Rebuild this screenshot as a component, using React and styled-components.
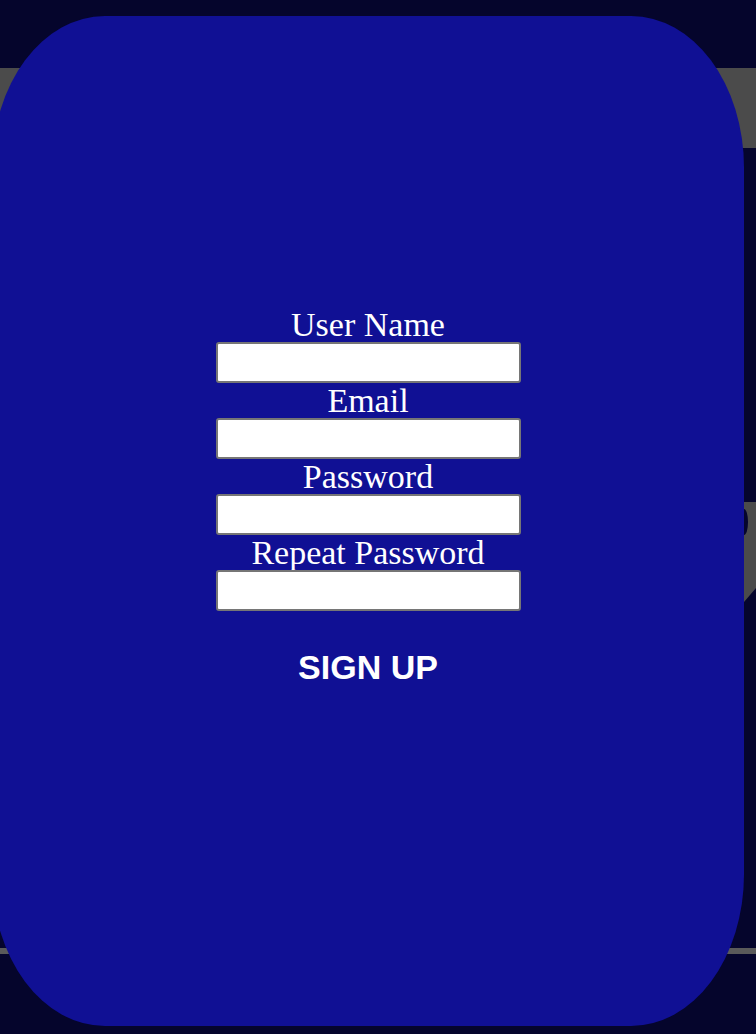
import React from 'react';
import styled, { createGlobalStyle } from 'styled-components';

const GlobalStyle = createGlobalStyle`
  html, body {
    margin: 0;
    padding: 0;
    background: #05052c;
    overflow: hidden;
  }
`;

const App = () => {
  return (
    <>
      <GlobalStyle />
      <Page>
        <Header />
        <Main>
          <SideMark viewBox="0 0 16 100" aria-hidden="true">
            <path d="M0 0 H16 V86 L4 100 H0 Z" fill="#4b4b4b" />
            <ellipse cx="4" cy="20" rx="4" ry="13" fill="#05052c" />
          </SideMark>
        </Main>
        <FooterLine />

        <Modal>
          <Form onSubmit={(e) => e.preventDefault()}>
            <Label htmlFor="username">User Name</Label>
            <Input id="username" type="text" />
            <Label htmlFor="email">Email</Label>
            <Input id="email" type="email" />
            <Label htmlFor="password">Password</Label>
            <Input id="password" type="password" />
            <Label htmlFor="repeat">Repeat Password</Label>
            <Input id="repeat" type="password" />
            <SubmitButton type="submit">SIGN UP</SubmitButton>
          </Form>
        </Modal>
      </Page>
    </>
  );
};

const Page = styled.div`
  position: relative;
  width: 756px;
  height: 1034px;
  padding-top: 68px;
  box-sizing: border-box;
`;

const Header = styled.div`
  height: 80px;
  background: #4b4b4b;
`;

const Main = styled.div`
  height: 800px;
  display: flex;
  justify-content: flex-end;
  align-items: flex-start;
`;

const SideMark = styled.svg`
  width: 16px;
  height: 100px;
  margin-top: 354px;
`;

const FooterLine = styled.div`
  height: 6px;
  background: #5a5a5a;
`;

const Modal = styled.div`
  position: absolute;
  top: 16px;
  left: -8px;
  width: 752px;
  height: 1010px;
  border-radius: 15%;
  background: #101094;
  display: flex;
  justify-content: center;
  padding-top: 291px;
  box-sizing: border-box;
`;

const Form = styled.form`
  width: 305px;
  display: flex;
  flex-direction: column;
  align-items: center;
`;

const Label = styled.label`
  display: block;
  width: 100%;
  text-align: center;
  color: #ffffff;
  font-family: "Liberation Serif", "Times New Roman", serif;
  font-size: 34px;
  line-height: 35px;
  white-space: nowrap;
`;

const Input = styled.input`
  display: block;
  width: 100%;
  height: 41px;
  margin: 0;
  padding: 0 8px;
  border: 2px solid #767676;
  border-radius: 3px;
  background: #ffffff;
  box-sizing: border-box;
  font-size: 16px;

  &:focus {
    outline: none;
  }
`;

const SubmitButton = styled.button`
  margin-top: 37px;
  padding: 0;
  border: none;
  background: none;
  color: #ffffff;
  font-family: "Liberation Sans", Arial, sans-serif;
  font-weight: bold;
  font-size: 34px;
  line-height: normal;
  cursor: pointer;
`;

export default App;
